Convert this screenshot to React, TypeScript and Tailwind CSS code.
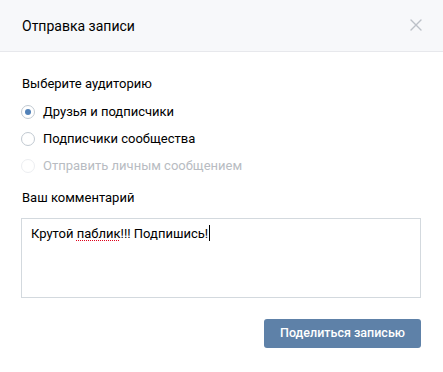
import React from "react";

function Radio({ checked, disabled, label }: { checked?: boolean; disabled?: boolean; label: string }) {
  return (
    <div className="flex h-[27px] items-center">
      <div
        className={
          "ml-[-1px] flex h-[14px] w-[14px] items-center justify-center rounded-full border " +
          (disabled ? "border-[#eceef1]" : "border-[#c1c9d1]")
        }
      >
        {checked && <div className="h-[6px] w-[6px] rounded-full bg-[#5181b8]" />}
      </div>
      <span
        className={
          "ml-[8px] text-[13px] leading-[18px] " + (disabled ? "text-[#b8bcc2]" : "text-[#000]")
        }
      >
        {label}
      </span>
    </div>
  );
}

export default function App() {
  return (
    <div
      className="h-[372px] w-[443px] overflow-hidden bg-white"
      style={{ fontFamily: "Roboto, 'Noto Sans', sans-serif" }}
    >
      <div className="flex h-[52px] items-center justify-between border-b border-[#e7e8ec] bg-[#f7f8fa] pl-[22px] pr-[22px]">
        <span className="text-[14px] leading-[18px] text-[#000]">Отправка записи</span>
        <svg width="12" height="12" viewBox="0 0 12 12" className="mr-[-1px] mt-[-2px]">
          <path d="M1 1L11 11M11 1L1 11" stroke="#bcc1c8" strokeWidth="1.4" strokeLinecap="round" />
        </svg>
      </div>
      <div className="pl-[21px] pr-[22px] pt-[23px]">
        <div className="ml-px text-[13px] leading-[18px] text-[#000]">Выберите аудиторию</div>
        <div className="mt-[5px] ml-[1px]">
          <Radio checked label="Друзья и подписчики" />
          <Radio label="Подписчики сообщества" />
          <Radio disabled label="Отправить личным сообщением" />
        </div>
        <div className="mt-[10px] ml-px text-[13px] leading-[18px] text-[#000]">Ваш комментарий</div>
        <div className="mt-[11px] h-[80px] w-[400px] border border-[#d3d9de] bg-white pl-[9px] pt-[2px]">
          <span className="text-[13px] leading-[18px] text-[#000]">
            Крутой{" "}
            <span className="underline decoration-dotted decoration-[#e0001a] decoration-1 underline-offset-2">
              паблик
            </span>
            !!! Подпишись!
            <span className="ml-[1px] inline-block h-[16px] w-px bg-black align-[-3px]" />
          </span>
        </div>
        <div className="mt-[21px] flex justify-end">
          <div className="flex h-[29px] w-[157px] items-center justify-center rounded-[3px] bg-[#5e81a8] text-[12.5px] font-medium text-white">
            Поделиться записью
          </div>
        </div>
      </div>
    </div>
  );
}
